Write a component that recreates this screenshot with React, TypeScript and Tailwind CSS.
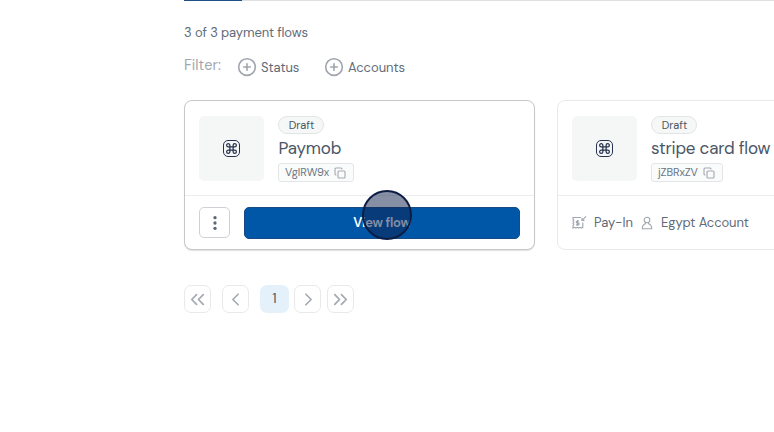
import type { ReactNode } from "react";
import { ChevronLeft, ChevronRight, ChevronsLeft, ChevronsRight, CirclePlus, Command, Copy } from "lucide-react";

function FlowCard({ title, titleClass, code, codeClass, codeBox, active, children }: {
  title: string; titleClass: string; code: string; codeClass: string; codeBox: string; active?: boolean; children: ReactNode;
}) {
  return (
    <article className={`flex h-[150px] w-[351px] shrink-0 flex-col rounded-lg border bg-white ${active ? "border-[#c5c7cb] shadow-[0_1px_1px_rgba(0,0,0,0.12)]" : "border-[#e8e9eb]"}`}>
      <div className="flex h-[95px] shrink-0 border-b border-[#ebeced] pl-[14px] pt-[15px]">
        <div className="flex size-[65px] items-center justify-center rounded-[5px] bg-[#f5f7f7]">
          <div className="flex size-[17px] items-center justify-center rounded-[5px] border-[1.5px] border-[#26324f]">
            <Command size={13} strokeWidth={2.3} className="shrink-0 text-[#26324f]" />
          </div>
        </div>
        <div className="ml-[14px] flex flex-col items-start">
          <span className="flex h-[18px] w-[46px] items-center justify-center rounded-full border border-[#e1e4e6] bg-[#f6f8f8] pl-px text-[11px] text-[#4a5560]">Draft</span>
          <h2 className={`mt-[3px] h-[22px] text-[17px] leading-[22px] text-[#4a5666] ${titleClass}`}>{title}</h2>
          <span className={`mt-[4px] flex h-[19px] items-center justify-between rounded-[3px] border border-[#e3e5e8] bg-[#fafbfb] pl-[6px] pr-[7px] text-[11px] text-[#6b7684] ${codeBox}`}>
            <span className={codeClass}>{code}</span>
            <Copy size={12} strokeWidth={2.2} className="text-[#a3a9b2]" />
          </span>
        </div>
      </div>
      <div className="flex grow items-center pl-[14px] pr-[14px]">{children}</div>
    </article>
  );
}

function PageButton({ className, children }: { className: string; children: ReactNode }) {
  return (
    <button className={`flex h-[28px] shrink-0 items-center justify-center rounded-[7px] ${className}`}>{children}</button>
  );
}

const outline = "w-[27px] border border-[#e9e9ec] text-[#a3a8b2]";

export default function App() {
  return (
    <main className="h-[432px] w-[774px] overflow-hidden bg-white pl-[184px] font-['DM_Sans','Inter',sans-serif]">
      <div className="flex h-px bg-[#dedfe1]">
        <div className="h-px w-[58px] bg-[#1e4f86]" />
      </div>
      <p className="mt-[23px] h-[17px] whitespace-nowrap text-[13px] leading-[17px] tracking-[-0.12px] text-[#5f6b78]">3 of 3 payment flows</p>
      <div className="mt-[15px] flex h-[22px] items-center whitespace-nowrap text-[13px] text-[#5f6b78]">
        <span className="w-[53px] pb-[2px] text-[14.5px] tracking-[0.05px] text-[#a1a7ae]">Filter:</span>
        <button className="flex w-[87px] items-center gap-[4px] tracking-[-0.05px]">
          <CirclePlus size={20} strokeWidth={1.9} className="text-[#a0a5ad]" /><span className="pt-px">Status</span>
        </button>
        <button className="flex items-center gap-[4px] tracking-[-0.05px]">
          <CirclePlus size={20} strokeWidth={1.9} className="text-[#a0a5ad]" /><span className="pt-px">Accounts</span>
        </button>
      </div>
      <section className="mt-[22px] flex gap-[22px] whitespace-nowrap">
        <FlowCard title="Paymob" titleClass="pl-[0.5px] tracking-[-0.2px]" code="VglRW9x" codeClass="tracking-[0px]" codeBox="w-[76px]" active>
          <button className="flex size-[31px] shrink-0 items-center justify-center rounded-[5px] border border-[#cfd1d6]">
            <svg width="6" height="18" viewBox="0 0 6 18" fill="#5e6675">
              <circle cx="3" cy="3.7" r="1.65" /><circle cx="3" cy="9" r="1.65" /><circle cx="3" cy="14.3" r="1.65" />
            </svg>
          </button>
          <button className="relative ml-[14px] h-[32px] w-[276px] shrink-0 rounded-[5px] border border-[#164b85] bg-[#0057a8] text-[13px] font-semibold tracking-[-0.25px] text-white">
            View flow
            <span className="absolute left-[117px] top-[-18px] size-[50px] rounded-full border-2 border-[#0d1d43] bg-[#10204c]/50" />
          </button>
        </FlowCard>
        <FlowCard title="stripe card flow" titleClass="tracking-[-0.2px]" code="jZBRxZV" codeClass="tracking-[-0.1px]" codeBox="w-[72px]">
          <svg width="15" height="15" viewBox="0 0 15 15" fill="none" stroke="#a0a7b0" strokeWidth="1.15">
            <path d="M9 2.5H1V4l.8 1-.8 1 .8 1.2-.8 1.2.8 1.2-.8 1.2v2.2l1.5-.7 1.4.7 1.4-.7 1.4.7 1.4-.7 1.4.7 1.3-.7V7.5" />
            <path d="M14 1.3l-3.6 3.8M10 3v2.5h2.5M7 6H5.2a.9.9 0 0 0 0 1.9h1a.9.9 0 0 1 0 1.9H4M5.6 5v5.8" />
          </svg>
          <span className="ml-[7px] w-[47px] text-[13px] text-[#5f6b78]">Pay-In</span>
          <svg width="12" height="14" viewBox="0 0 12 14" fill="none" stroke="#a0a7b0" strokeWidth="1.1">
            <circle cx="6" cy="4" r="2.8" /><path d="M4.4 6.4v1.3C2.3 8.4 1.3 9.4 1.3 12.8h9.4c0-3.4-1-4.4-3.1-5.1V6.4" />
          </svg>
          <span className="ml-[8px] text-[13px] tracking-[-0.1px] text-[#5f6b78]">Egypt Account</span>
        </FlowCard>
      </section>
      <nav className="mt-[35px] flex">
        <PageButton className={outline}><ChevronsLeft size={23} strokeWidth={1.8} className="mr-px shrink-0" /></PageButton>
        <PageButton className={`ml-[11px] ${outline}`}><ChevronLeft size={21} strokeWidth={1.9} className="shrink-0" /></PageButton>
        <PageButton className="ml-[11px] w-[29px] bg-[#e5f1fa] pb-[2px] text-[14px] text-[#4e5863]">1</PageButton>
        <PageButton className={`ml-[5px] ${outline}`}><ChevronRight size={21} strokeWidth={1.9} className="ml-px shrink-0" /></PageButton>
        <PageButton className={`ml-[6px] ${outline}`}><ChevronsRight size={23} strokeWidth={1.8} className="shrink-0" /></PageButton>
      </nav>
    </main>
  );
}
